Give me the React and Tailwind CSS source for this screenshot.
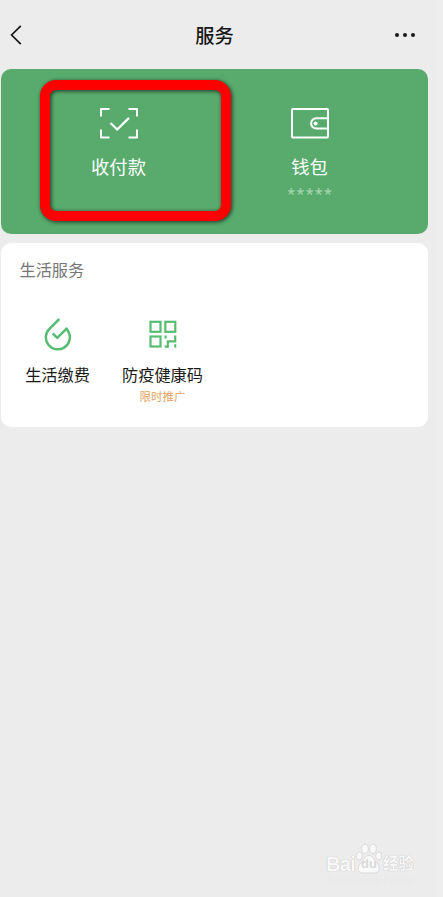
const BackIcon = () => (
  <svg width="12" height="20" viewBox="0 0 12 20" fill="none" stroke="#191919" strokeWidth="1.7">
    <path d="M10.8 0.8L1.6 10L10.8 19.2" />
  </svg>
);

const ScanIcon = () => (
  <svg width="40" height="32" viewBox="0 0 40 32" fill="none" stroke="white" strokeWidth="2">
    <path d="M2 9.5V2H10.5M29.5 2H38V9.5M38 22.5V30.5H29.5M10.5 30.5H2V22.5" strokeLinejoin="round" />
    <path d="M11.5 16L18.2 22.5L30 10.9" strokeWidth="2.2" />
  </svg>
);

const WalletIcon = () => (
  <svg width="40" height="32" viewBox="0 0 40 32" fill="none" stroke="white" strokeWidth="2">
    <rect x="2" y="2" width="36" height="28.5" rx="0.8" />
    <path d="M38 11.2H26.3a5.2 5.2 0 0 0 0 10.4H38" />
    <circle cx="25.6" cy="16.4" r="2" fill="white" stroke="none" />
  </svg>
);

const DropIcon = () => (
  <svg width="28" height="34" viewBox="0 0 28 34" fill="none" stroke="#57bd72" strokeWidth="2.5">
    <path d="M15.3 2L5.4 11.8A12 12 0 1 0 24.8 15.4L22.6 11.6L13.2 20.9L8.8 16.5" strokeLinejoin="round" />
  </svg>
);

const CodeIcon = () => (
  <svg width="28" height="28" viewBox="0 0 28 28" fill="none" stroke="#57bd72" strokeWidth="2.2">
    <rect x="1.5" y="1.8" width="10" height="10" />
    <rect x="16.3" y="1.8" width="10" height="10" />
    <rect x="1.5" y="16.5" width="10" height="10" />
    <path d="M16.6 15.4V18.4M26.2 15.4V21.4H18.8V26.6H15.6M26.2 24.2V27.5" />
  </svg>
);

const services = [
  { name: "生活缴费", icon: <DropIcon /> },
  { name: "防疫健康码", icon: <CodeIcon />, note: "限时推广" },
];

function Watermark() {
  return (
    <div className="absolute left-[326px] top-[842px] w-[94px] h-[46px] text-[#f8f8f8] font-['Liberation_Sans','Noto_Sans_CJK_SC',sans-serif]">
      <div className="flex items-center h-[43px] [text-shadow:0_0_1px_#aaa]">
        <span className="w-[29px] text-[20px] leading-5 font-bold tracking-[-0.6px]">Bai</span>
        <span className="relative w-[28px] h-[32px] shrink-0 flex justify-center -mt-[11px]">
          <svg className="absolute inset-0" width="28" height="32" viewBox="0 0 28 32" fill="#f9f9f9" stroke="#d0d0d0" strokeWidth="0.7">
            <ellipse cx="4.3" cy="14" rx="3" ry="4" />
            <ellipse cx="10" cy="6.8" rx="3.3" ry="4.6" />
            <ellipse cx="18" cy="6.8" rx="3.3" ry="4.6" />
            <ellipse cx="23.7" cy="14" rx="3" ry="4" />
            <path d="M14 13.5C17.7 13.5 18.7 18 21.7 20.5C25.7 24.5 24.7 30.5 20.7 31H7.2C2.2 30.5 1.7 25 6.2 21C9.2 18 9.7 13.5 14 13.5Z" />
          </svg>
          <span className="relative mt-[15px] text-[13px] leading-[14px] font-bold text-[#d9d9d9] [text-shadow:none]">du</span>
        </span>
        <span className="text-[15.5px] leading-5 font-bold whitespace-nowrap">经验</span>
      </div>
      <div className="-mt-[12px] text-[11px] leading-3 text-[#f3f3f3] [text-shadow:0_0_1px_#d5d5d5]">jingyan.baidu.com</div>
    </div>
  );
}

export default function App() {
  return (
    <div className="relative flex w-[443px] h-[897px] overflow-hidden bg-[#eeeeee] font-['Noto_Sans_CJK_SC',sans-serif]">
      <div className="w-[436px] bg-[#ececec] pl-px pr-2">
        <header className="flex items-center justify-between h-[69px] text-[#191919]">
          <div className="w-10 pl-[9px]">
            <BackIcon />
          </div>
          <h1 className="text-[19.3px] leading-7 font-medium">服务</h1>
          <div className="w-10 flex gap-[4px] pl-[7px]">
            <i className="w-1 h-1 rounded-full bg-[#191919]" />
            <i className="w-1 h-1 rounded-full bg-[#191919]" />
            <i className="w-1 h-1 rounded-full bg-[#191919]" />
          </div>
        </header>

        {/* Pay and wallet */}
        <section className="grid grid-cols-[191px_191px] h-[165px] pl-[22px] pt-[38px] rounded-[10px] bg-[#58ab6d] text-white">
          <div className="flex flex-col items-center">
            <ScanIcon />
            <span className="mt-[13px] text-[18.3px] leading-7">收付款</span>
          </div>
          <div className="flex flex-col items-center">
            <WalletIcon />
            <span className="mt-[13px] text-[18.3px] leading-7">钱包</span>
            <span className="mt-[4px] pl-[2px] text-[17px] leading-5 tracking-[1.9px] text-[#a3d4ae] font-['Roboto',sans-serif]">*****</span>
          </div>
        </section>

        {/* Life services */}
        <section className="mt-[9px] h-[184px] rounded-[10px] bg-white">
          <h2 className="pl-[18.5px] pt-[14px] text-[16.2px] leading-6 text-[#767676]">生活服务</h2>
          <div className="grid grid-cols-[105px_105px] pl-1 mt-[36px]">
            {services.map((item) => (
              <div key={item.name} className="flex flex-col items-center">
                <div className="flex items-center justify-center h-[34px]">{item.icon}</div>
                <span className="mt-[11px] text-[16.2px] leading-6 text-[#191919]">{item.name}</span>
                {item.note && <span className="mt-[2px] text-[11.5px] leading-4 text-[#e3a561]">{item.note}</span>}
              </div>
            ))}
          </div>
        </section>
      </div>

      {/* Highlight frame over the pay entry */}
      <div className="absolute left-[40px] top-[80px] w-[191px] h-[141px] rounded-[16px] border-[10.5px] border-[#fe0000] [filter:drop-shadow(1px_1px_2px_rgba(0,0,0,0.7))]" />
      <Watermark />
    </div>
  );
}
